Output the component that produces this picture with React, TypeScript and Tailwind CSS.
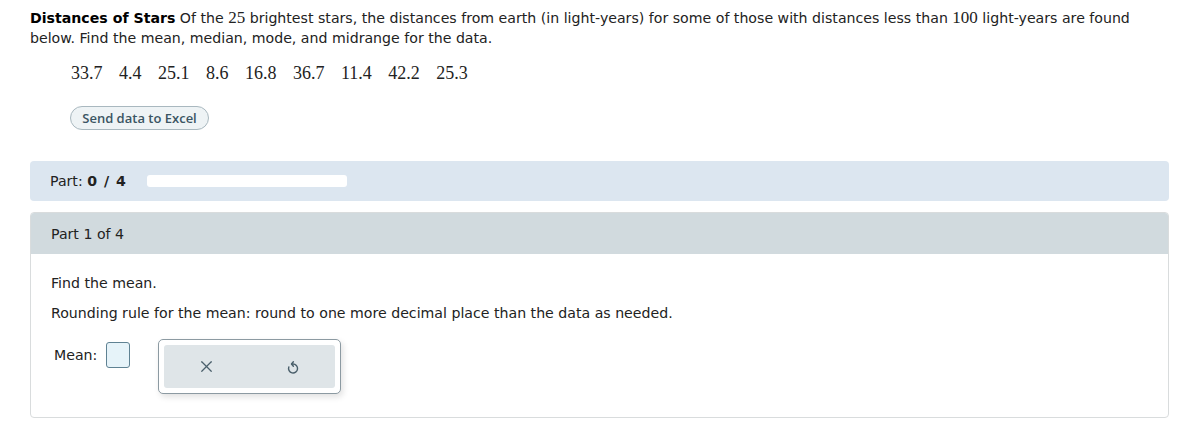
import { X } from "lucide-react";

const data = ["33.7", "4.4", "25.1", "8.6", "16.8", "36.7", "11.4", "42.2", "25.3"];

function ResetIcon() {
  return (
    <svg width="18" height="18" viewBox="0 0 24 24" fill="none" stroke="currentColor" strokeWidth="1.9" strokeLinecap="round" strokeLinejoin="round" className="ml-[68px] text-[#4a5f6b]">
      <path d="M10.5 8 H12 A6 6 0 1 1 6.4 12" />
      <path d="M12.5 5 L10 8 L12.5 11" />
    </svg>
  );
}

export default function App() {
  return (
    <main className="min-h-screen bg-white pl-[30px] pr-[24px] pt-[8px] font-['DejaVu_Sans',Verdana,sans-serif] text-[14.15px] leading-[20px] text-[#222]">
      <p className="pr-[20px]">
        <span className="font-bold text-black">Distances of Stars</span> Of the{" "}
        <span className="font-['Liberation_Serif',serif] text-[17px]">25</span> brightest stars, the
        distances from earth (in light-years) for some of those with distances less than{" "}
        <span className="font-['Liberation_Serif',serif] text-[17px]">100</span> light-years are found
        below. Find the mean, median, mode, and midrange for the data.
      </p>

      <div className="mt-[15px] flex gap-[16.5px] pl-[41px] font-['Liberation_Serif',serif] text-[18px] leading-[20px] text-[#222]">
        {data.map((d, i) => (
          <span key={i}>{d}</span>
        ))}
      </div>

      <div className="mt-[23px] pl-[40px]">
        <button
          type="button"
          className="inline-flex h-[24px] w-[139px] items-center justify-center rounded-full border border-[#a9b8bf] bg-[#eef3f5] font-['Open_Sans',sans-serif] text-[13px] font-semibold text-[#3b5563]"
        >
          Send data to Excel
        </button>
      </div>

      <section className="mt-[31px] flex h-[40px] items-center rounded-[4px] bg-[#dce6f0] pl-[20px]">
        <span>
          Part: <span className="font-bold tracking-[1px]">0 / 4</span>
        </span>
        <div className="ml-[20px] h-[12px] w-[200px] rounded-[3px] bg-white" />
      </section>

      <section className="mt-[11px] h-[206px] overflow-hidden rounded-[4px] border border-[#d9dcdd]">
        <div className="flex h-[41px] items-center bg-[#d1dade] pl-[20px]">Part 1 of 4</div>
        <div className="px-[20px] pt-[19px]">
          <p>Find the mean.</p>
          <p className="mt-[10px]">
            Rounding rule for the mean: round to one more decimal place than the data as needed.
          </p>
          <div className="mt-[16px] flex items-start">
            <span className="ml-[3px] mt-[6px]">Mean:</span>
            <div className="ml-[9px] mt-[3px] h-[26px] w-[24px] rounded-[3px] border border-[#5f8293] bg-[#e6f3f9]" />
            <div className="ml-[28px] h-[55px] w-[183px] rounded-[5px] border border-[#8c9aa2] bg-white p-[5px] shadow-[2px_3px_6px_rgba(0,0,0,0.12)]">
              <div className="flex h-full items-center rounded-[3px] bg-[#dfe5e8]">
                <X className="ml-[33px] text-[#4a5f6b]" size={19} strokeWidth={1.5} />
                <ResetIcon />
              </div>
            </div>
          </div>
        </div>
      </section>
    </main>
  );
}
